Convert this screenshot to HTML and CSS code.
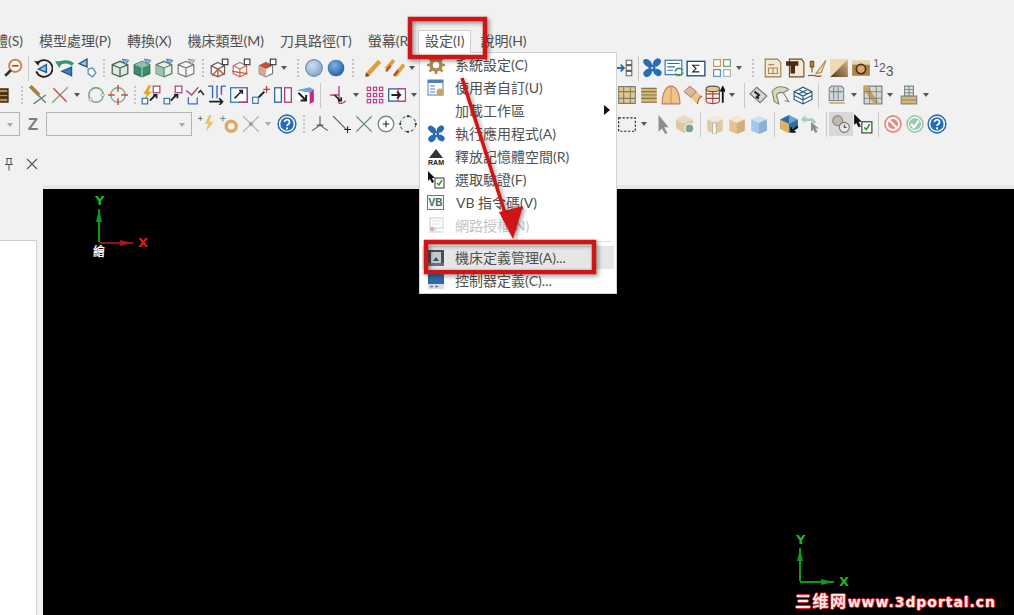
FILE: index.html
```html
<!DOCTYPE html>
<html lang="zh-Hant">
<head>
<meta charset="utf-8">
<title>設定</title>
<link rel="stylesheet" href="styles.css">
</head>
<body>
<svg class="defs" width="0" height="0" aria-hidden="true">
<defs>
<radialGradient id="sl" cx=".4" cy=".35" r=".7"><stop offset="0" stop-color="#cfe0f2"/><stop offset="1" stop-color="#7ea3c8"/></radialGradient>
<radialGradient id="sb" cx=".4" cy=".35" r=".7"><stop offset="0" stop-color="#7fb2e0"/><stop offset="1" stop-color="#1c5f9e"/></radialGradient>
<linearGradient id="gr" x1="0" y1="1" x2="1" y2="0"><stop offset="0" stop-color="#5a3a1c"/><stop offset="1" stop-color="#dcb98a"/></linearGradient>
<symbol id="mag" viewBox="0 0 18 18"><circle cx="11" cy="7" r="5.500" fill="#fff" stroke="#c9884a" stroke-width="1.800"/><path d="M8 7h6" stroke="#b8452e" stroke-width="1.600"/><path d="M7 11l-5 5" stroke="#333" stroke-width="2.400"/></symbol>
<symbol id="rot" viewBox="0 0 18 18"><path d="M4 5a7.500 7.500 0 1 1-1 7" fill="none" stroke="#222" stroke-width="1.600"/><path d="M1 3l5 0-1 4z" fill="#222"/><path d="M12 6L5 10l7 3z" fill="#9cc2e4" stroke="#2a5d94" stroke-width="1.400"/></symbol>
<symbol id="und" viewBox="0 0 18 18"><path d="M3 6a8 6 0 0 1 13 0" fill="none" stroke="#2f9a6e" stroke-width="3"/><path d="M0 3l7 0-3 6z" fill="#2f9a6e"/><path d="M15 8L6 12l9 4z" fill="#3f7db8" stroke="#24527f"/></symbol>
<symbol id="dia" viewBox="0 0 18 18"><path d="M9 1L2 5l7 3z" fill="#9cc2e4" stroke="#2a5d94" stroke-width="1.300"/><path d="M10 10l4-1 3 4-3 4-4-3z" fill="#fff" stroke="#5a8cc0" stroke-width="1.200"/></symbol>
<symbol id="cu1" viewBox="0 0 18 18"><path d="M2 6l7-3 7 3v8l-7 3-7-3zM2 6l7 3 7-3M9 9v8" fill="#dfe6e0" stroke="#49675a" stroke-width="1.200"/><path d="M11 1l6 1-3 4z" fill="#8fb6d8" stroke="#3d6e9e" stroke-width=".7"/></symbol>
<symbol id="cu2" viewBox="0 0 18 18"><path d="M2 6l7-3 7 3v8l-7 3-7-3z" fill="#3d8a6c" stroke="#2d6a54"/><path d="M2 6l7 3 7-3-7-3z" fill="#8fbfa8"/><path d="M9 9v8" stroke="#cfe" stroke-width=".7"/><path d="M11 1l6 1-3 4z" fill="#8fb6d8" stroke="#3d6e9e" stroke-width=".7"/></symbol>
<symbol id="cu3" viewBox="0 0 18 18"><path d="M2 6l7-3 7 3v8l-7 3-7-3z" fill="#e7eee8" stroke="#5b7a6c" stroke-width="1.200"/><path d="M2 6l7 3v8l-7-3z" fill="#9fc2ae"/><path d="M2 6l7 3 7-3M9 9v8" fill="none" stroke="#5b7a6c"/><path d="M11 1l6 1-3 4z" fill="#8fb6d8" stroke="#3d6e9e" stroke-width=".7"/></symbol>
<symbol id="cu4" viewBox="0 0 18 18"><path d="M2 6l7-3 7 3v8l-7 3-7-3zM2 6l7 3 7-3M9 9v8" fill="#f7f7f7" stroke="#7a7a7a" stroke-width="1.100"/><path d="M11 1l6 1-3 4z" fill="#bcd0e2" stroke="#6a8cb0" stroke-width=".7"/></symbol>
<symbol id="rc1" viewBox="0 0 18 18"><path d="M2 7l6-3 6 3v7l-6 3-6-3zM2 7l6 3 6-3M8 10v7" fill="#fff" stroke="#6a5a50" stroke-width="1.100"/><path d="M8 10L3 16M8 10l6 5" stroke="#d2522f" stroke-width="1.300"/><rect x="12" y="1" width="5" height="5" fill="#fff" stroke="#333"/></symbol>
<symbol id="rc2" viewBox="0 0 18 18"><path d="M2 7l6-3 6 3v7l-6 3-6-3zM2 7l6 3 6-3M8 10v7" fill="#fff" stroke="#c7705a" stroke-width="1.100"/><path d="M1 12l14 2" stroke="#d2522f" stroke-width="1.200"/><rect x="12" y="1" width="5" height="5" fill="#fff" stroke="#333"/></symbol>
<symbol id="rc3" viewBox="0 0 18 18"><path d="M2 7l6-3 6 3v7l-6 3-6-3z" fill="#fff" stroke="#777"/><path d="M2 7l6-3 6 3-6 3z" fill="#c94b2f"/><path d="M2 7l6 3v7l-6-3z" fill="#e0a090"/><rect x="12" y="1" width="5" height="5" fill="#fff" stroke="#333"/></symbol>
<symbol id="s1" viewBox="0 0 18 18"><circle cx="9" cy="9" r="7.500" fill="url(#sl)" stroke="#6f8fae"/></symbol>
<symbol id="s2" viewBox="0 0 18 18"><circle cx="9" cy="9" r="7.500" fill="url(#sb)"/></symbol>
<symbol id="pen" viewBox="0 0 18 18"><path d="M3 16L15 3" stroke="#dca03a" stroke-width="4"/><path d="M2 17l1-4 3 3z" fill="#7a4a2a"/></symbol>
<symbol id="pen2" viewBox="0 0 18 18"><path d="M1 10L8 2M9 16L17 6" stroke="#dca03a" stroke-width="3.400"/><path d="M1 12l4-5M8 16l4-5" stroke="#c0452a" stroke-width="2"/></symbol>
<symbol id="ef" viewBox="0 0 15 18"><path d="M0 3h14v4H5v1h9v3H5v1h9v4H0" fill="#b58a4a" stroke="#3a2a14" stroke-width="1.300"/></symbol>
<symbol id="scr" viewBox="0 0 18 18"><path d="M2 1l8 8" stroke="#a77f44" stroke-width="3.400"/><path d="M9 9l7 7M5 17l11-8" stroke="#5f8a70" stroke-width="1.300"/></symbol>
<symbol id="rx" viewBox="0 0 18 18"><path d="M2 16L16 2" stroke="#7aa38a" stroke-width="1.200"/><path d="M3 3l12 12" stroke="#d2452f" stroke-width="1.200"/></symbol>
<symbol id="gc" viewBox="0 0 18 18"><circle cx="9" cy="9" r="6.500" fill="none" stroke="#6a9a80" stroke-width="1.200"/><circle cx="15" cy="9" r="1.400" fill="#fff" stroke="#6a9a80" stroke-width=".7"/><circle cx="4" cy="13" r="1.400" fill="#fff" stroke="#6a9a80" stroke-width=".7"/></symbol>
<symbol id="tg" viewBox="0 0 18 18"><circle cx="9" cy="9" r="6.500" fill="none" stroke="#7aa38a" stroke-width="1.200"/><path d="M9 0v6M9 12v6M0 9h6M12 9h6" stroke="#d2452f" stroke-width="1.300"/></symbol>
<symbol id="lz" viewBox="0 0 18 18"><path d="M7 0L2 8h3L3 13l7-7H7l2-6z" fill="#e4aa1e"/><rect x="11" y="1" width="6" height="6" fill="#fff" stroke="#a0306e"/><rect x="1" y="12" width="5" height="5" fill="#fff" stroke="#2c6aa8"/><path d="M8 14l5-5M11 9h3v3" stroke="#222" stroke-width="1.600" fill="none"/></symbol>
<symbol id="sq" viewBox="0 0 18 18"><rect x="11" y="1" width="6" height="6" fill="#fff" stroke="#a0306e"/><rect x="1" y="12" width="5" height="5" fill="#fff" stroke="#2c6aa8"/><path d="M7 14l5-5M10 9h3v3" stroke="#222" stroke-width="1.600" fill="none"/></symbol>
<symbol id="ang" viewBox="0 0 18 18"><path d="M1 5l5 4 6-7" fill="none" stroke="#b43a86" stroke-width="1.200"/><path d="M3 11v6h8v-6" fill="none" stroke="#3a78b8" stroke-width="1.200"/><path d="M17 9l-3-4-2 2" stroke="#222" stroke-width="1.300" fill="none"/></symbol>
<symbol id="fl" viewBox="0 0 18 18"><path d="M1 1h4v11M10 1h-1v11M13 1h4M13 1v6" fill="none" stroke="#2c6aa8" stroke-width="1.200"/><path d="M13 1v8" stroke="#b43a86" stroke-width="1.200"/><path d="M2 15h12M11 12l3 3-3 3" stroke="#222" stroke-width="1.500" fill="none"/></symbol>
<symbol id="bx" viewBox="0 0 18 18"><rect x="1.500" y="2.500" width="15" height="13" fill="#fff" stroke="#3a78b8" stroke-width="1.200"/><path d="M16.500 2.500v13H9" fill="none" stroke="#b43a86" stroke-width="1.200"/><path d="M5 12l7-7M9 5h3v3" stroke="#222" stroke-width="1.400" fill="none"/></symbol>
<symbol id="sp" viewBox="0 0 18 18"><rect x="1.500" y="11" width="5" height="5.500" fill="#fff" stroke="#2c6aa8"/><path d="M7 11l5-5" stroke="#222" stroke-width="1.800"/><path d="M14 1v6M11 4h6" stroke="#c73a3a" stroke-width="1.200"/></symbol>
<symbol id="rr" viewBox="0 0 18 18"><rect x="1.500" y="2.500" width="6" height="13" fill="#fff" stroke="#2c6aa8" stroke-width="1.200"/><rect x="10.500" y="2.500" width="6" height="13" fill="#fff" stroke="#b43a86" stroke-width="1.200"/></symbol>
<symbol id="box3" viewBox="0 0 18 18"><path d="M1 5l12-3 4 2-4 3z" fill="#6ba4d6"/><path d="M13 7l4-3v11l-4 2z" fill="#c42a86"/><path d="M1 5l12 2v10L1 13z" fill="#fff"/><path d="M3 7l7 7M10 9v5H5" stroke="#222" stroke-width="1.800" fill="none"/></symbol>
<symbol id="axs" viewBox="0 0 18 18"><path d="M9 1v8H1M9 9v7c0 1 4 1 6-2" fill="none" stroke="#b43a86" stroke-width="1.200"/><path d="M5 9l5 5M8 14h3v-3" stroke="#222" stroke-width="1.500" fill="none"/></symbol>
<symbol id="gp" viewBox="0 0 18 18"><g fill="none" stroke="#b43a86"><rect x="2" y="2" width="3" height="3"/><rect x="7.500" y="2" width="3" height="3"/><rect x="13" y="2" width="3" height="3"/><rect x="2" y="7.500" width="3" height="3"/><rect x="7.500" y="7.500" width="3" height="3"/><rect x="13" y="7.500" width="3" height="3"/><rect x="2" y="13" width="3" height="3"/><rect x="7.500" y="13" width="3" height="3"/><rect x="13" y="13" width="3" height="3"/></g></symbol>
<symbol id="ba" viewBox="0 0 18 18"><rect x="1.500" y="3.500" width="15" height="11" fill="#fff" stroke="#2c6aa8" stroke-width="1.200"/><path d="M10 3.500h6.500v11H10z" fill="#fff" stroke="#b43a86"/><path d="M4 9h7M9 6l3 3-3 3" stroke="#222" stroke-width="1.600" fill="none"/></symbol>
<symbol id="pl" viewBox="0 0 18 18"><path d="M1 4h4M3 2v4" stroke="#777"/><path d="M11 1L7 9h3l-2 7 7-9h-4l2-6z" fill="#edc06a"/></symbol>
<symbol id="pg" viewBox="0 0 18 18"><path d="M1 4h5M3.500 1.500v5" stroke="#888"/><circle cx="11" cy="11" r="4.500" fill="none" stroke="#d8aa62" stroke-width="3"/></symbol>
<symbol id="sx" viewBox="0 0 18 18"><path d="M2 2l14 14M16 2L2 16" stroke="#a8b8b0" stroke-width="1.100"/><path d="M7 9h4M9 7v4" stroke="#888"/></symbol>
<symbol id="hp" viewBox="0 0 18 18"><circle cx="9" cy="9" r="8" fill="#fff" stroke="#2a6cb4" stroke-width="1.400"/><circle cx="9" cy="9" r="6" fill="#2a6cb4"/><path d="M6.700 7.200a2.300 2.200 0 1 1 3.400 2c-.8.5-1.100.9-1.100 1.700" fill="none" stroke="#fff" stroke-width="1.500"/><circle cx="9" cy="13" r="1" fill="#fff"/></symbol>
<symbol id="tr" viewBox="0 0 18 18"><path d="M9 2v8L2 15M9 10l7 5M6 10h6" fill="none" stroke="#556" stroke-width="1"/></symbol>
<symbol id="ln" viewBox="0 0 18 18"><path d="M1 2l12 12" stroke="#556"/><path d="M14 11v6M11 14h6" stroke="#222"/></symbol>
<symbol id="xx" viewBox="0 0 18 18"><path d="M2 2l14 14M16 2L2 16" stroke="#6d8c7c" stroke-width="1.100"/></symbol>
<symbol id="cp" viewBox="0 0 18 18"><circle cx="9" cy="9" r="7" fill="#fff" stroke="#6d8c7c" stroke-width="1.200"/><path d="M6 9h6M9 6v6" stroke="#222"/></symbol>
<symbol id="cd" viewBox="0 0 18 18"><circle cx="9" cy="9" r="7" fill="none" stroke="#6d8c7c" stroke-width="1.200" stroke-dasharray="3 2.500"/><circle cx="9" cy="2" r="1" fill="#222"/><circle cx="2" cy="9" r="1" fill="#222"/><circle cx="16" cy="9" r="1" fill="#222"/><circle cx="9" cy="16" r="1" fill="#222"/></symbol>
<symbol id="ar" viewBox="0 0 18 18"><path d="M1 9h7M6 6l3 3-3 3" stroke="#2c6aa8" stroke-width="1.600" fill="none"/><path d="M11 2h5v4h-5zM11 7h5v4h-5zM11 12h5v4h-5z" fill="#fff" stroke="#666"/></symbol>
<symbol id="fan" viewBox="0 0 18 18"><g fill="#2a6cb4"><ellipse cx="5" cy="4.500" rx="4.500" ry="3" transform="rotate(40 5 4.500)"/><ellipse cx="13.500" cy="4" rx="4" ry="3" transform="rotate(-50 13.500 4)"/><ellipse cx="14" cy="13" rx="3.800" ry="3" transform="rotate(30 14 13)"/><ellipse cx="5" cy="13.500" rx="4" ry="3.200" transform="rotate(-40 5 13.500)"/><circle cx="9" cy="9" r="3.200"/></g><circle cx="9" cy="9" r="1" fill="#dce8f2"/></symbol>
<symbol id="lst" viewBox="0 0 18 18"><rect x="1" y="2" width="15" height="13" fill="#fff" stroke="#2a6cb4"/><path d="M3 5h11M3 8h7M3 11h5" stroke="#2a6cb4"/><path d="M10 12a4 4 0 0 1 7-1M17 13a4 4 0 0 1-7 1" stroke="#3a9a5a" stroke-width="1.600" fill="none"/></symbol>
<symbol id="sig" viewBox="0 0 18 18"><rect x="1" y="3" width="16" height="13" fill="#fff" stroke="#1c4a70" stroke-width="1.200"/><path d="M12 6.500H6l3 3-3 3h6" fill="none" stroke="#222"/></symbol>
<symbol id="fs" viewBox="0 0 18 18"><rect x="1.500" y="1.500" width="6" height="6" fill="#fff" stroke="#b8934e"/><rect x="10.500" y="1.500" width="6" height="6" fill="#fff" stroke="#5a9a6e"/><rect x="1.500" y="10.500" width="6" height="6" fill="#fff" stroke="#4a84c4"/><rect x="10.500" y="10.500" width="6" height="6" fill="#fff" stroke="#aaa"/></symbol>
<symbol id="dc1" viewBox="0 0 18 18"><path d="M2 1h11l3 3v13H2z" fill="#f5e8d0" stroke="#9a7a4a"/><path d="M5 9h8v5H5zM5 6h5M9 9v5" fill="none" stroke="#a88a5a"/></symbol>
<symbol id="dc2" viewBox="0 0 18 18"><path d="M4 1h11l2 3v13H4z" fill="#f5e8d0" stroke="#6a4a2a"/><path d="M1 3h11v4h-3v7H5V7H1z" fill="#4a2a14"/></symbol>
<symbol id="qll" viewBox="0 0 18 18"><path d="M8 14L17 2l-4 11z" fill="#e8dcc0" stroke="#b08a4a"/><path d="M3 3v5h3V3zM4.500 8v5M1 16c4-2 8 2 12 0" fill="#c9812f" stroke="#7a4a1a"/></symbol>
<symbol id="tri" viewBox="0 0 18 18"><path d="M1 17L17 1v16z" fill="url(#gr)"/><path d="M1 17L17 1H1z" fill="#f0d9b4"/></symbol>
<symbol id="cam" viewBox="0 0 18 18"><rect x="1" y="4" width="16" height="12" fill="#b0824a"/><rect x="1" y="2" width="16" height="4" fill="#e9d3ae"/><circle cx="9" cy="10" r="4.200" fill="#d6a86a" stroke="#4a2e14" stroke-width="1.500"/></symbol>
<symbol id="gb" viewBox="0 0 18 18"><rect x="1.500" y="1.500" width="15" height="15" fill="#edc489"/><path d="M1.500 1.500h15v15h-15zM1.500 6h15M1.500 12h15M6 1.500v15M12 1.500v15" fill="none" stroke="#6f8478"/></symbol>
<symbol id="lb" viewBox="0 0 18 18"><rect x="2" y="3" width="14" height="13" fill="#dcb470"/><path d="M2 3h14M2 6h14M2 9h14M2 12h14M2 15.500h14" stroke="#7a7a5a"/></symbol>
<symbol id="ac" viewBox="0 0 18 18"><path d="M1 17C1 6 5 1 9 1s8 5 8 16z" fill="#edc489" stroke="#c07a6a"/><path d="M9 1v16" stroke="#c07a6a" stroke-width=".7"/></symbol>
<symbol id="tb" viewBox="0 0 18 18"><path d="M1 6l5-5 11 9-4 7z" fill="#edc489"/><path d="M1 6l5-5 6 5-5 5z" fill="#d9bca0" stroke="#a66" stroke-width=".8"/><path d="M13 17c0-3 2-6 4-7" stroke="#c03030" fill="none"/></symbol>
<symbol id="cy" viewBox="0 0 18 18"><ellipse cx="7" cy="3.500" rx="6" ry="2.500" fill="#edc489" stroke="#555"/><path d="M1 3.500v11c0 3 12 3 12 0v-11M1 8h12M1 12h12M7 6v11" fill="none" stroke="#a0463a"/><path d="M16 16V3M14 6l2-4 2 4" stroke="#111" stroke-width="1.600" fill="none"/></symbol>
<symbol id="v1" viewBox="0 0 18 18"><path d="M1 8l6-6 9 8-6 6z" fill="#d8d8d0" stroke="#6a7a70"/><path d="M5 6l4 3-2 2 2 1" stroke="#222" stroke-width="1.800" fill="none"/></symbol>
<symbol id="v2" viewBox="0 0 18 18"><path d="M1 6c3-5 10-6 15-2l-5 3c-2-1-5 0-6 2l2 8-4-2z" fill="#e2d6b8" stroke="#78877e"/><path d="M11 7l5 8-4-1" fill="#fff" stroke="#78877e"/></symbol>
<symbol id="v3" viewBox="0 0 18 18"><path d="M1 6l8-4 8 4v7l-8 4-8-4zM1 6l8 4 8-4M9 10v7M5 4l8 4M13 4L5 8M1 9.500l8 4 8-4" fill="#fff" stroke="#1e5c78" stroke-width="1"/></symbol>
<symbol id="w1" viewBox="0 0 18 18"><path d="M4 1h9l2 2v11H2V3z" fill="#cfd8d6" stroke="#7a8a90"/><path d="M6 2v11M10 2v11M3 6h11" stroke="#7a8a90"/><path d="M1 15h14l2 2H3z" fill="#dcb470"/></symbol>
<symbol id="w2" viewBox="0 0 18 18"><rect x="1" y="1" width="16" height="16" fill="#d8d8d8" stroke="#6a7a70"/><path d="M1 5l9 12h5L4 1H1z" fill="#c9a468"/><path d="M6 1v16M12 1v16M1 6h16M1 12h16" stroke="#6a7a70" stroke-width=".7"/></symbol>
<symbol id="w3" viewBox="0 0 18 18"><path d="M5 1h8v9H5z" fill="#e2e4e2" stroke="#7a8a8a"/><path d="M2 10h14v7H2z" fill="#dcb470" stroke="#7a8a8a"/><path d="M5 4h8M5 7h8M9 1v9M2 13.500h14" stroke="#7a8a8a"/></symbol>
<symbol id="dr" viewBox="0 0 18 18"><rect x="1.500" y="3.500" width="15" height="12" fill="none" stroke="#222" stroke-dasharray="2 1.500"/></symbol>
<symbol id="cg" viewBox="0 0 18 18"><path d="M5 1v15l3-3 3 5 2-1-3-5h4z" fill="#8c8c8c"/></symbol>
<symbol id="bc" viewBox="0 0 18 18"><path d="M1 5l7-4 8 4v8l-8 4-7-4z" fill="#ddc8a4"/><path d="M1 5l7 4 8-4-8-4z" fill="#e8dcc8"/><circle cx="13" cy="13" r="4.500" fill="#fff"/><circle cx="13" cy="13" r="3.500" fill="#7ca48e"/></symbol>
<symbol id="c1" viewBox="0 0 18 18"><path d="M2 5l7-3 7 3v10l-7 3-7-3z" fill="#e2c9a0"/><path d="M2 5l7 3 7-3-7-3z" fill="#f2e8d8"/><rect x="7" y="8" width="3" height="10" fill="#fff" stroke="#999" stroke-width=".6"/></symbol>
<symbol id="c2" viewBox="0 0 18 18"><path d="M2 5l7-3 7 3v10l-7 3-7-3z" fill="#e2c391"/><path d="M2 5l7 3 7-3-7-3z" fill="#f2e8d8"/><path d="M9 8l7-3v10l-7 3z" fill="#cfae80"/></symbol>
<symbol id="c3" viewBox="0 0 18 18"><path d="M2 5l7-3 7 3v10l-7 3-7-3z" fill="#a8c6e6"/><path d="M2 5l7 3 7-3-7-3z" fill="#d0e0f0"/><path d="M9 8l7-3v10l-7 3z" fill="#8ab0d8"/></symbol>
<symbol id="hx" viewBox="0 0 18 18"><path d="M1 5l8-4 8 4v8l-8 4-8-4z" fill="#2a6ca8"/><path d="M1 5l8 4v8l-8-4z" fill="#e4b060"/><path d="M9 9l8-4-8-4z" fill="#fff" opacity=".35"/><path d="M17 11l-6 5M11 12v4h4" stroke="#111" stroke-width="1.600" fill="none"/></symbol>
<symbol id="ub" viewBox="0 0 18 18"><path d="M1 5h9l3 3" fill="none" stroke="#a8ccc0" stroke-width="2.400"/><path d="M0 5l4-4v7z" fill="#a8ccc0"/><path d="M9 7v9l2-2 2 3 2-1-2-3h3z" fill="#8c8c8c"/></symbol>
<symbol id="ck" viewBox="0 0 18 18"><circle cx="6" cy="6" r="4.500" fill="#c0b8a8" stroke="#8a8a8a"/><circle cx="12" cy="12" r="4.500" fill="#e8e8e8" stroke="#777"/><path d="M12 9.500V12h2" stroke="#555" fill="none"/></symbol>
<symbol id="cc" viewBox="0 0 18 18"><path d="M1 0v10l2-2 2 4 2-1-2-4h3z" fill="#111"/><rect x="8" y="7" width="9" height="10" fill="#fff" stroke="#333"/><path d="M10 12l2 2 3-5" stroke="#3a9a3a" stroke-width="1.500" fill="none"/></symbol>
<symbol id="no" viewBox="0 0 18 18"><circle cx="9" cy="9" r="8" fill="#e88a80"/><circle cx="9" cy="9" r="5.500" fill="none" stroke="#fff" stroke-width="1.800"/><path d="M5 5l8 8" stroke="#fff" stroke-width="1.800"/></symbol>
<symbol id="okg" viewBox="0 0 18 18"><circle cx="9" cy="9" r="8" fill="#9ccab0"/><circle cx="9" cy="9" r="6" fill="none" stroke="#fff"/><path d="M5.500 9l2.500 3 4.500-6" stroke="#fff" stroke-width="1.800" fill="none"/></symbol>
<symbol id="gear" viewBox="0 0 18 18"><circle cx="9" cy="9" r="5" fill="none" stroke="#b08a50" stroke-width="3.600"/><path d="M9 0v4M9 14v4M0 9h4M14 9h4M2.500 2.500l3 3M12.500 12.500l3 3M15.500 2.500l-3 3M5.500 12.500l-3 3" stroke="#b08a50" stroke-width="2.600"/></symbol>
<symbol id="win" viewBox="0 0 18 18"><rect x="1" y="1" width="15" height="15" fill="#fff" stroke="#4a7fb8"/><rect x="1" y="1" width="15" height="3" fill="#4a7fb8"/><path d="M3 7h5M3 10h5M3 13h5" stroke="#4a7fb8"/><circle cx="13" cy="13" r="3.500" fill="#c9a468"/></symbol>
<symbol id="net" viewBox="0 0 18 18"><rect x="3" y="1" width="13" height="10" fill="#fff" stroke="#c8d0d8"/><path d="M5 4h9M5 7h9" stroke="#d8dde0"/><path d="M1 15h16M9 11v4" stroke="#d0d4d8"/><circle cx="5" cy="12" r="2.500" fill="#eab0a8"/></symbol>
<symbol id="mch" viewBox="0 0 18 18"><rect x="1" y="1" width="16" height="16" fill="#4a5058"/><rect x="4" y="3" width="10" height="11" fill="#c4cad0"/><path d="M6 12l3-4 3 4z" fill="#3a5070"/><rect x="1" y="14" width="16" height="3" fill="#6a7078"/></symbol>
<symbol id="ctl" viewBox="0 0 18 18"><rect x="1" y="1" width="16" height="11" fill="#2f6aa8"/><rect x="1" y="12" width="16" height="5" fill="#d8dce0"/><path d="M3 14.500h3M8 14.500h3" stroke="#6a7a8a" stroke-width="1.500"/></symbol>
<symbol id="pinx" viewBox="0 0 12 14"><path d="M3 1.500h6M4 1.500v6h4v-6M2 7.500h8M6 7.500v6" fill="none" stroke="#555" stroke-width="1"/></symbol>
<symbol id="clx" viewBox="0 0 12 12"><path d="M1 1l10 10M11 1L1 11" stroke="#555" stroke-width="1.100"/></symbol>
</defs>
</svg>

<div class="app">
  <nav class="menubar">
    <span class="mi">體(S)</span>
    <span class="mi">模型處理(P)</span>
    <span class="mi">轉換(X)</span>
    <span class="mi">機床類型(M)</span>
    <span class="mi">刀具路徑(T)</span>
    <span class="mi">螢幕(R)</span>
    <span class="mi active">設定(I)</span>
    <span class="mi">說明(H)</span>
  </nav>

  <div class="row r1">
    <div class="side">
      <svg class="i"><use href="#mag"/></svg><i class="sep"></i>
      <svg class="i"><use href="#rot"/></svg><svg class="i"><use href="#und"/></svg><svg class="i"><use href="#dia"/></svg><i class="grip"></i>
      <svg class="i"><use href="#cu1"/></svg><svg class="i"><use href="#cu2"/></svg><svg class="i"><use href="#cu3"/></svg><svg class="i"><use href="#cu4"/></svg><i class="grip"></i>
      <svg class="i"><use href="#rc1"/></svg><svg class="i"><use href="#rc2"/></svg><svg class="i mw"><use href="#rc3"/></svg><b class="caret"></b><i class="grip"></i>
      <svg class="i"><use href="#s1"/></svg><svg class="i"><use href="#s2"/></svg><i class="grip"></i>
      <svg class="i mw"><use href="#pen"/></svg><svg class="i"><use href="#pen2"/></svg><b class="caret"></b>
    </div>
    <div class="main">
      <svg class="i"><use href="#ar"/></svg><i class="sep nar"></i>
      <svg class="i"><use href="#fan"/></svg><svg class="i"><use href="#lst"/></svg><svg class="i"><use href="#sig"/></svg><svg class="i mw"><use href="#fs"/></svg><b class="caret"></b><i class="grip mwg"></i>
      <svg class="i"><use href="#dc1"/></svg><svg class="i"><use href="#dc2"/></svg><svg class="i"><use href="#qll"/></svg><svg class="i"><use href="#tri"/></svg><svg class="i"><use href="#cam"/></svg>
      <span class="num"><sup>1</sup>2<sub>3</sub></span>
    </div>
  </div>

  <div class="row r2">
    <div class="side flush">
      <svg class="i cut"><use href="#ef"/></svg><i class="grip"></i>
      <svg class="i"><use href="#scr"/></svg><svg class="i"><use href="#rx"/></svg><b class="caret"></b><svg class="i"><use href="#gc"/></svg><svg class="i"><use href="#tg"/></svg><i class="grip"></i>
      <svg class="i"><use href="#lz"/></svg><svg class="i"><use href="#sq"/></svg><svg class="i"><use href="#ang"/></svg><svg class="i"><use href="#fl"/></svg><svg class="i"><use href="#bx"/></svg><svg class="i"><use href="#sp"/></svg><svg class="i"><use href="#rr"/></svg><svg class="i"><use href="#box3"/></svg><i class="sep"></i>
      <svg class="i mw"><use href="#axs"/></svg><b class="caret"></b><svg class="i"><use href="#gp"/></svg><svg class="i"><use href="#ba"/></svg><b class="caret"></b>
    </div>
    <div class="main shift">
      <svg class="i"><use href="#gb"/></svg><svg class="i"><use href="#lb"/></svg><svg class="i"><use href="#ac"/></svg><svg class="i"><use href="#tb"/></svg><svg class="i"><use href="#cy"/></svg><b class="caret"></b><i class="sep"></i>
      <svg class="i"><use href="#v1"/></svg><svg class="i"><use href="#v2"/></svg><svg class="i"><use href="#v3"/></svg><i class="sep"></i>
      <svg class="i mw"><use href="#w1"/></svg><b class="caret"></b><svg class="i"><use href="#w2"/></svg><b class="caret"></b><svg class="i"><use href="#w3"/></svg><b class="caret"></b>
    </div>
  </div>

  <div class="row r3">
    <div class="side flush">
      <span class="combo short"><b class="caret pale"></b></span>
      <span class="zlabel">Z</span>
      <span class="combo wide"><b class="caret pale"></b></span>
      <svg class="i lead"><use href="#pl"/></svg><svg class="i"><use href="#pg"/></svg><svg class="i"><use href="#sx"/></svg><b class="caret pale"></b><svg class="i"><use href="#hp"/></svg><i class="grip"></i>
      <svg class="i"><use href="#tr"/></svg><svg class="i"><use href="#ln"/></svg><svg class="i"><use href="#xx"/></svg><svg class="i"><use href="#cp"/></svg><svg class="i"><use href="#cd"/></svg>
    </div>
    <div class="main shift">
      <svg class="i"><use href="#dr"/></svg><b class="caret"></b><svg class="i"><use href="#cg"/></svg><svg class="i"><use href="#bc"/></svg><i class="sep"></i>
      <svg class="i"><use href="#c1"/></svg><svg class="i"><use href="#c2"/></svg><svg class="i"><use href="#c3"/></svg><i class="sep"></i>
      <svg class="i"><use href="#hx"/></svg><svg class="i"><use href="#ub"/></svg><i class="sep"></i>
      <svg class="i pressed"><use href="#ck"/></svg><svg class="i"><use href="#cc"/></svg><i class="sep"></i>
      <svg class="i"><use href="#no"/></svg><svg class="i"><use href="#okg"/></svg><svg class="i"><use href="#hp"/></svg>
    </div>
  </div>

  <div class="dock"><svg class="pin"><use href="#pinx"/></svg><svg class="close"><use href="#clx"/></svg></div>
  <div class="band"></div>

  <div class="work">
    <aside class="panel"><div class="tree"></div></aside>
    <main class="view">
      <div class="axes big">
        <span class="ay">Y</span><span class="ax">X</span><i class="ly"></i><i class="lx"></i>
        <span class="wcs">繪</span>
      </div>
      <div class="axes small">
        <span class="ay">Y</span><span class="ax">X</span><i class="ly"></i><i class="lx"></i>
      </div>
      <div class="mark"><span class="cn">三维网</span>www.3dportal.cn</div>
    </main>
  </div>
</div>

<div class="menu">
  <div class="it"><svg class="mic"><use href="#gear"/></svg>系統設定(C)</div>
  <div class="it"><svg class="mic"><use href="#win"/></svg>使用者自訂(U)</div>
  <div class="it"><span class="mic"></span>加載工作區<b class="sub"></b></div>
  <div class="it"><svg class="mic"><use href="#fan"/></svg>執行應用程式(A)</div>
  <div class="it"><span class="mic ram"><b class="peak"></b>RAM</span>釋放記憶體空間(R)</div>
  <div class="it"><svg class="mic"><use href="#cc"/></svg>選取驗證(F)</div>
  <div class="it"><span class="mic vbx">VB</span>VB 指令碼(V)</div>
  <div class="it off"><svg class="mic"><use href="#net"/></svg>網路授權(N)</div>
  <hr class="rule">
  <div class="it hot"><svg class="mic"><use href="#mch"/></svg>機床定義管理(A)...</div>
  <div class="it"><svg class="mic"><use href="#ctl"/></svg>控制器定義(C)...</div>
</div>

<svg class="notes" viewBox="0 0 1014 615" aria-hidden="true">
  <g class="redline">
    <rect x="410" y="19" width="75" height="38"/>
    <rect x="426" y="242" width="168" height="30"/>
  </g>
  <path class="redshaft" d="M462 78L506 216"/>
  <path class="redhead" d="M513 239L499 212L523 206z"/>
</svg>
</body>
</html>
```

FILE: styles.css
```css
* { box-sizing: border-box; }
html, body { margin: 0; width: 1014px; height: 615px; overflow: hidden; }
body {
  position: relative;
  background: #f1f1f1;
  color: #505050;
  font: 14px/1 Lato, "Noto Sans CJK TC", "Liberation Sans", sans-serif;
}
.defs { position: absolute; }
.app { display: flex; flex-direction: column; height: 615px; padding-top: 30px; }

.menubar { display: flex; height: 22px; margin-left: -14px; align-items: center; white-space: nowrap; flex: none; }
.mi { padding: 0 8px; height: 22px; line-height: 21px; }
.mi.active {
  margin: 0 1px 0 -2px; padding: 0 6px; background: #fff;
  border: 1px solid #cfcfcf; border-bottom: 0; line-height: 20px; height: 23px; position: relative; z-index: 3;
}

.row { display: flex; align-items: center; flex: none; }
.r1 { height: 28px; margin-top: 2px; }
.r2 { height: 26px; }
.r3 { height: 32px; }
.side { display: flex; align-items: center; gap: 2px; width: 614px; padding-left: 3px; flex: none; overflow: hidden; }
.side.flush { padding-left: 0; }
.main { display: flex; align-items: center; gap: 2px; flex: none; }
.main.shift { margin-left: 3px; }

.i { width: 20px; height: 20px; flex: none; display: block; filter: blur(.3px); }
.i.mw { margin-left: 4px; }
.i.cut { width: 15px; margin: 0 6px 0 -6px; }
.i.lead { margin-left: 3px; }
.i.pressed { background: #d8d8d8; outline: 2px solid #d8d8d8; }
.sep { width: 1px; height: 25px; background: #c9c9c9; margin: 0 2.5px; flex: none; }
.sep.nar { margin: 0 1.5px; }
.grip { width: 2px; height: 18px; margin: 0 3.5px; flex: none; background: repeating-linear-gradient(#c4c4c4 0 2px, transparent 2px 4px); }
.grip.mwg { margin-right: 7px; }
.caret { width: 12px; height: 5px; flex: none; position: relative; }
.caret::after { content: ""; position: absolute; left: 2px; top: 0; border: 3.5px solid transparent; border-top: 4px solid #555; border-bottom: 0; }
.caret.pale::after { border-top-color: #aaa; }
.num { font: 12px/1 "Liberation Sans", sans-serif; color: #5a5a5a; margin-left: 1px; }
.num sup { font-size: 10px; vertical-align: 5px; }
.num sub { font-size: 14px; vertical-align: -4px; }

.combo { position: relative; display: block; height: 24px; border: 1px solid #b0b5ba; background: #f1f1f1; flex: none; }
.combo.short { width: 20px; border-left: 0; }
.combo.wide { width: 146px; }
.combo .caret { position: absolute; right: 2px; top: 10px; }
.zlabel { width: 22px; text-align: center; font: bold 17px/1 "Liberation Sans", sans-serif; color: #7d7d7d; flex: none; }

.dock { height: 45px; flex: none; width: 43px; display: flex; align-items: center; gap: 11px; padding: 2px 0 0 3px; }
.pin { width: 12px; height: 14px; }
.close { width: 12px; height: 12px; }
.band { height: 4px; margin-left: 43px; background: #e6e6e6; flex: none; }

.work { display: flex; flex: 1; min-height: 0; }
.panel { width: 43px; flex: none; padding-top: 51px; }
.tree { height: 100%; width: 37px; background: #fff; border: 1px solid #cfcfcf; border-left: 0; border-bottom: 0; }
.view { flex: 1; background: #000; position: relative; overflow: hidden; }

.axes { position: absolute; width: 60px; height: 60px; font: bold 13px/1 "DejaVu Sans", sans-serif; }
.axes.big { left: 50px; top: 5px; }
.axes.small { left: 751px; top: 344px; }
.ay, .ax { position: absolute; }
.ay { left: 2px; top: 0; color: #21b52b; }
.ax { left: 45px; top: 42px; color: #d61f1f; }
.small .ax { color: #21b52b; }
.ly, .lx { position: absolute; display: block; }
.ly { left: 5px; top: 15px; width: 2px; height: 33px; background: #0d9a16; }
.ly::before { content: ""; position: absolute; left: -2px; top: 0; border: 3px solid transparent; border-bottom: 13px solid #0d9a16; border-top: 0; }
.lx { left: 6px; top: 48px; width: 34px; height: 2px; background: #8a1414; }
.lx::after { content: ""; position: absolute; right: 0; top: -2px; border: 3px solid transparent; border-left: 13px solid #a81616; border-right: 0; }
.small .lx { background: #0d9a16; }
.small .lx::after { border-left-color: #0d9a16; }
.wcs { position: absolute; left: 0; top: 51px; font: bold 12px/1 "Noto Sans CJK TC", sans-serif; color: #fff; }
.mark {
  position: absolute; right: 18px; bottom: 6px; white-space: nowrap;
  font: bold 14px/1 "DejaVu Sans", sans-serif; letter-spacing: .95px; color: #fde9e9;
  text-shadow: 1px 0 #d92626, -1px 0 #d92626, 0 1px #d92626, 0 -1px #d92626;
}
.mark .cn { font-family: "Noto Sans CJK SC", sans-serif; font-size: 16px; letter-spacing: 1.6px; }

.menu {
  position: absolute; left: 419px; top: 52px; width: 198px; height: 242px;
  background: #fff; border: 1px solid #d2d2d2; z-index: 2;
}
.it { display: flex; align-items: center; height: 23px; padding: 0 0 0 6px; position: relative; white-space: nowrap; }
.mic { width: 20px; height: 18px; margin-right: 9px; flex: none; display: block; position: relative; }
.it.off { color: #c4c4c4; }
.it.hot { background: #e6e6e6; margin: 0 2px; padding-left: 4px; }
.sub { position: absolute; right: 6px; top: 6px; border: 5px solid transparent; border-left: 6px solid #111; border-right: 0; }
.rule { margin: 4px 5px 4px 34px; border: 0; height: 1px; background: #dedede; }
.ram { font: bold 7px/1 "Liberation Sans", sans-serif; color: #222; text-align: center; padding-top: 11px; }
.peak { position: absolute; left: 3px; top: 1px; border: 7px solid transparent; border-bottom: 9px solid #333; border-top: 0; }
.vbx { font: bold 10px/13px "Liberation Sans", sans-serif; color: #3b6f58; border: 1px solid #5a8a70; background: #f4f8f6; text-align: center; height: 15px; width: 17px; margin: 0 12px 0 1px; }

.notes { position: absolute; left: 0; top: 0; width: 1014px; height: 615px; z-index: 5; pointer-events: none; filter: drop-shadow(2px 2px 2px rgba(0,0,0,.4)); }
.redline { fill: none; stroke: #cf1515; stroke-width: 4.5; }
.redshaft { fill: none; stroke: #cf1515; stroke-width: 3.5; }
.redhead { fill: #cf1515; }
```
